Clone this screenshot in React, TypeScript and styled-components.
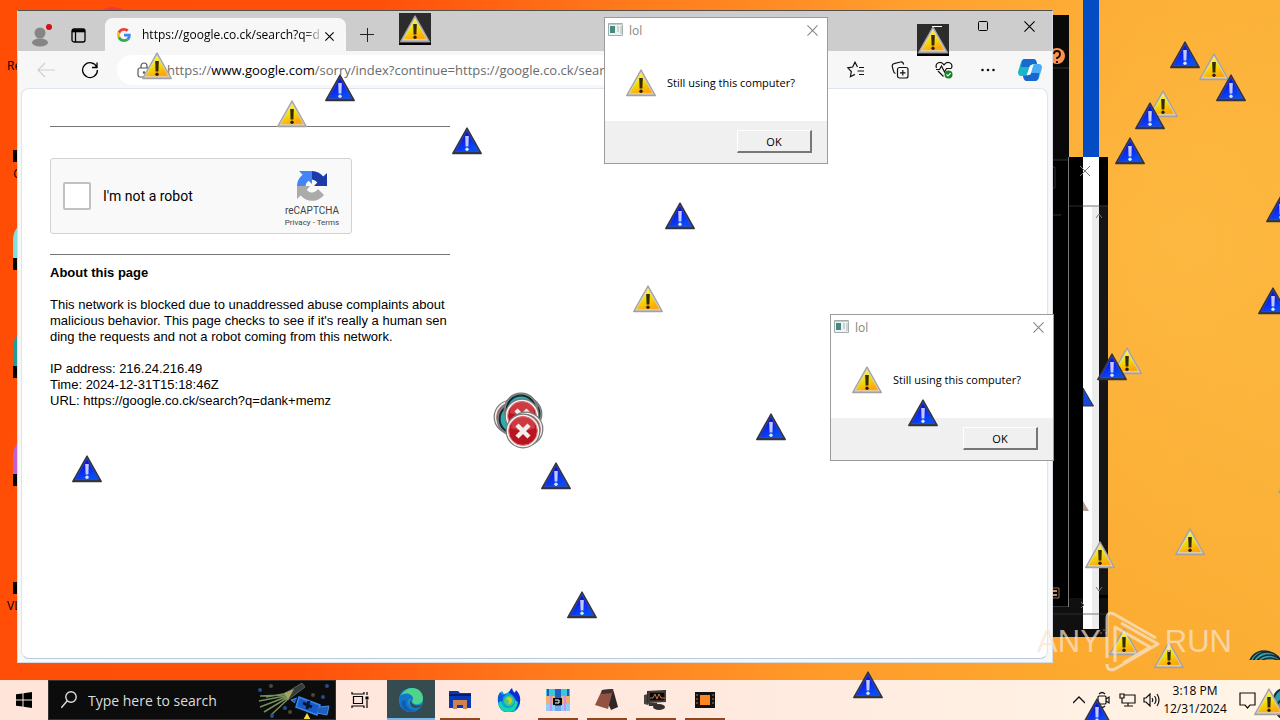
import React from "react";
import styled, { createGlobalStyle } from "styled-components";

const GlobalStyle = createGlobalStyle`
  * { box-sizing: border-box; }
  body { margin: 0; font-family: "Open Sans", "Noto Sans", sans-serif; color: #000; }
  button, input { font: inherit; color: inherit; }
  button { border: 0; padding: 0; background: none; }
`;

const Screen = styled.div`
  display: flex;
  flex-direction: column;
  height: 100vh;
  position: relative;
  overflow: hidden;
`;

const Desktop = styled.main`
  flex: 1;
  position: relative;
  overflow: hidden;
  background:
    radial-gradient(circle at 92% 35%, rgba(255, 205, 90, 0.4), transparent 36%),
    linear-gradient(97deg, #ff4d06 0%, #ff500a 28%, #ff7a1c 46%, #ff9a2a 66%, #fca92f 84%, #fbae34 100%);
`;

const Shortcut = styled.div<{ $y: number }>`
  position: absolute;
  left: 2px;
  top: ${(p) => p.$y}px;
  width: 48px;
  padding-left: 5px;
  font-size: 12px;
  line-height: 16px;
`;

const ShortcutIcon = styled.span<{ $y: number; $color: string }>`
  position: absolute;
  left: 13px;
  top: ${(p) => p.$y}px;
  width: 40px;
  height: 50px;
  border-radius: 20px 20px 0 0;
  background: ${(p) => p.$color};
  &::after {
    content: "";
    position: absolute;
    left: 0;
    bottom: 0;
    width: 12px;
    height: 12px;
    background: #000;
  }
`;

const RedDisc = styled.span`
  position: absolute;
  left: 93px;
  top: 7px;
  width: 40px;
  height: 40px;
  border-radius: 50%;
  background: #f03a3a;
`;

const BlueStrip = styled.div`
  position: absolute;
  left: 1083px;
  top: 0;
  width: 16px;
  height: 157px;
  background: #034cc4;
`;

const BackWindow = styled.div<{ $x: number; $y: number; $w: number; $h: number }>`
  position: absolute;
  left: ${(p) => p.$x}px;
  top: ${(p) => p.$y}px;
  width: ${(p) => p.$w}px;
  height: ${(p) => p.$h}px;
  background: #000;
  overflow: hidden;
  svg { display: block; }
`;

const Browser = styled.section`
  position: absolute;
  left: 17px;
  right: 227px;
  top: 10px;
  bottom: 17px;
  display: flex;
  flex-direction: column;
  background: #f7f7f7;
  border: 1px solid #d7dce2;
  border-top-color: #55504c;
`;

const TabBar = styled.div`
  display: flex;
  align-items: flex-end;
  height: 40px;
  padding-left: 3px;
  background: #cdcdcd;
`;

const TabBarButton = styled.button`
  display: grid;
  place-items: center;
  width: 38px;
  height: 32px;
`;

const Tab = styled.div`
  display: flex;
  align-items: center;
  width: 241px;
  height: 33px;
  margin-left: 8px;
  margin-right: 2px;
  padding: 0 12px;
  background: #f7f7f7;
  border-radius: 8px 8px 0 0;
`;

const TabTitle = styled.span`
  flex: 1;
  margin-left: 11px;
  white-space: nowrap;
  font-size: 12px;
  line-height: 16px;
  mask-image: linear-gradient(90deg, #000 88%, transparent);
`;

const WindowButtons = styled.div`
  display: flex;
  align-self: flex-start;
  margin-left: auto;
`;

const WindowButton = styled.button`
  display: grid;
  place-items: center;
  width: 46px;
  height: 30px;
`;

const Toolbar = styled.div`
  display: flex;
  align-items: center;
  height: 37px;
  padding: 0 2px 0 6px;
`;

const ToolButton = styled.button<{ $narrow?: boolean }>`
  display: grid;
  place-items: center;
  width: ${(p) => (p.$narrow ? 40 : 44)}px;
  height: 32px;
`;

const AddressBar = styled.label`
  display: flex;
  flex: 1;
  min-width: 0;
  align-items: center;
  gap: 16px;
  height: 30px;
  margin-left: 5px;
  margin-right: 8px;
  padding-left: 20px;
  border-radius: 15px;
  background: #fff;
  overflow: hidden;
  white-space: nowrap;
  font-size: 13px;
  color: #6b6b6b;
  b { font-weight: 400; color: #000; }
`;

const Page = styled.article`
  flex: 1;
  margin: 0 4px 3px 3px;
  padding: 37px 28px 0;
  background: #fff;
  border: 1px solid #dfe5ee;
  border-bottom-color: #b9cbdd;
  border-radius: 8px;
  font-family: "Liberation Sans", Arial, sans-serif;
  font-size: 13px;
  line-height: 16px;
`;

const Column = styled.div`
  max-width: 400px;
`;

const Rule = styled.hr`
  height: 1px;
  margin: 0;
  border: 0;
  background: #777;
`;

const Captcha = styled.div`
  display: flex;
  align-items: center;
  width: 302px;
  height: 76px;
  margin: 31px 0 20px;
  padding: 0 9px 0 12px;
  background: #f9f9f9;
  border: 1px solid #d3d3d3;
  border-radius: 3px;
`;

const CaptchaLabel = styled.label`
  display: flex;
  flex: 1;
  align-items: center;
  gap: 12px;
  font-family: Roboto, sans-serif;
  font-size: 14px;
`;

const CaptchaCheck = styled.input`
  appearance: none;
  width: 28px;
  height: 28px;
  margin: 0;
  background: #fff;
  border: 2px solid #c1c1c1;
  border-radius: 2px;
`;

const CaptchaBrand = styled.div`
  display: flex;
  flex-direction: column;
  align-items: center;
  width: 60px;
  padding-top: 5px;
  font-family: Roboto, sans-serif;
  font-size: 10px;
  line-height: 14px;
  color: #444;
  svg { margin-bottom: 2px; }
`;

const CaptchaLinks = styled.div`
  font-size: 8px;
  line-height: 10px;
  a { color: inherit; text-decoration: none; }
`;

const Paragraph = styled.p`
  margin: 0 0 16px;
  white-space: nowrap;
`;

const Heading = styled.h1`
  margin: 10px 0 16px;
  font-size: 13px;
  line-height: 16px;
`;

const DialogBox = styled.section<{ $x: number; $y: number }>`
  position: absolute;
  left: ${(p) => p.$x}px;
  top: ${(p) => p.$y}px;
  width: 224px;
  height: 147px;
  display: flex;
  flex-direction: column;
  background: #fff;
  border: 1px solid #9b9b9b;
`;

const DialogTitle = styled.header`
  display: flex;
  align-items: center;
  gap: 5px;
  height: 24px;
  padding-left: 3px;
  font-size: 12px;
  color: #858585;
  button { display: grid; place-items: center; width: 30px; height: 24px; margin-left: auto; }
`;

const DialogBody = styled.div`
  display: flex;
  flex: 1;
  align-items: center;
  gap: 10px;
  padding: 2px 0 0 20px;
  font-size: 11px;
`;

const DialogFooter = styled.footer`
  display: flex;
  justify-content: flex-end;
  height: 42px;
  padding: 9px 15px 0 0;
  background: #f0f0f0;
`;

const OkButton = styled.button`
  width: 75px;
  height: 23px;
  background: #f0f0f0;
  border: 1px solid #fff;
  border-right: 2px solid #777;
  border-bottom: 2px solid #777;
  font-size: 11px;
`;

const Floating = styled.span<{ $x: number; $y: number; $dark?: boolean }>`
  position: absolute;
  left: ${(p) => p.$x - 16}px;
  top: ${(p) => p.$y - 3}px;
  width: 32px;
  height: 32px;
  background: ${(p) => (p.$dark ? "#2c2c2c" : "transparent")};
  border-bottom: ${(p) => (p.$dark ? "2px solid #000" : "0")};
  pointer-events: none;
  svg { display: block; }
`;

const MinimizeGhost = styled.span`
  position: absolute;
  left: 932px;
  top: 26px;
  width: 10px;
  height: 1px;
  background: #fff;
`;

const ErrorPile = styled.div`
  position: absolute;
  left: 490px;
  top: 388px;
  svg { display: block; }
`;

const CornerPile = styled.div`
  position: absolute;
  left: 1248px;
  top: 648px;
  height: 12px;
  overflow: hidden;
`;

const Watermark = styled.div`
  position: absolute;
  right: 48px;
  top: 609px;
  display: flex;
  align-items: center;
  gap: 2px;
  height: 66px;
  font-family: "Liberation Sans", sans-serif;
  font-size: 31px;
  color: rgba(250, 228, 208, 0.72);
`;

const Taskbar = styled.nav`
  position: relative;
  display: flex;
  height: 40px;
  background: linear-gradient(90deg, #ffe4da, #ffe9df 55%, #fff5e6);
`;

const TaskButton = styled.button<{ $active?: boolean; $open?: boolean }>`
  position: relative;
  display: grid;
  place-items: center;
  width: 48px;
  height: 40px;
  margin-right: 1px;
  background: ${(p) => (p.$active ? "#364b50" : "transparent")};
  &::after {
    content: "";
    position: absolute;
    left: ${(p) => (p.$active ? 0 : 4)}px;
    right: ${(p) => (p.$active ? 0 : 4)}px;
    bottom: 0;
    height: 2px;
    background: ${(p) => (p.$active ? "#76b9ed" : p.$open ? "#8f481c" : "transparent")};
  }
`;

const StartButton = styled.button`
  display: grid;
  place-items: center;
  width: 48px;
`;

const Search = styled.label`
  display: flex;
  align-items: center;
  width: 288px;
  padding-left: 12px;
  background: #0c0c0c;
  border: 1px solid #333;
  color: #dcdcdc;
  input {
    width: 168px;
    margin-left: 11px;
    padding: 0;
    border: 0;
    outline: 0;
    background: none;
    font-size: 14px;
  }
  input::placeholder { color: #dcdcdc; opacity: 1; }
`;

const TaskView = styled(StartButton)`
  margin-right: 3px;
`;

const Tray = styled.div`
  display: flex;
  align-items: center;
  margin-left: auto;
  padding-right: 21px;
`;

const TrayButton = styled.button`
  display: grid;
  place-items: center;
  width: 24px;
  height: 40px;
`;

const Clock = styled.time`
  width: 64px;
  margin: 0 8px 0 0;
  font-size: 12px;
  line-height: 18px;
  text-align: center;
  white-space: nowrap;
`;

function Triangle({ kind = "warn" }: { kind?: "warn" | "blue" }) {
  const warn = kind === "warn";
  return (
    <svg width="32" height="32" viewBox="0 0 32 32">
      <defs>
        <linearGradient id="fillWarn" x1="0" y1="0" x2="0.4" y2="1">
          <stop offset="0" stopColor="#ffff4a" />
          <stop offset="0.6" stopColor="#f2dc06" />
          <stop offset="1" stopColor="#ffa80c" />
        </linearGradient>
        <linearGradient id="fillBlue" x1="0" y1="0" x2="0.5" y2="1">
          <stop offset="0" stopColor="#0a0aa8" />
          <stop offset="0.5" stopColor="#0d1ff0" />
          <stop offset="1" stopColor="#064df5" />
        </linearGradient>
      </defs>
      <path d="M16 3 1.7 28.500h28.600Z" fill={warn ? "#c8c2ba" : "#343846"} stroke={warn ? "#a3a1a4" : "#31343f"} strokeWidth="1.4" strokeLinejoin="round" />
      <path d="M16 5.500 4.200 26.500h23.600Z" fill={warn ? "url(#fillWarn)" : "url(#fillBlue)"} stroke={warn ? "#e4dcc4" : "#3a4fd0"} strokeWidth="0.6" />
      <path d="M14.200 11h3.600l-.4 10.500h-2.800Z" fill={warn ? "#33290a" : "#c3caf6"} />
      <circle cx="16" cy="24.3" r="1.7" fill={warn ? "#2a2104" : "#dfe3ff"} />
    </svg>
  );
}

function Cross({ size = 10, color = "#000" }: { size?: number; color?: string }) {
  return (
    <svg width={size} height={size} viewBox="0 0 10 10" fill="none" stroke={color} strokeWidth={11 / size}>
      <path d="m.4.4 9.2 9.2M9.6.4.4 9.6" />
    </svg>
  );
}

function Dialog({ x, y }: { x: number; y: number }) {
  return (
    <DialogBox $x={x} $y={y} role="dialog" aria-label="lol">
      <DialogTitle>
        <svg width="16" height="14" viewBox="0 0 16 14">
          <path d="M.5.5h14v12H.5Z" fill="#edf2f2" stroke="#a3aeab" />
          <path d="M2 3h5v7H2Z" fill="#438a82" />
          <path d="M9 3h2v6H9ZM12 3h2v8h-2Z" fill="#ccd4d6" />
          <path d="M1 1.500h14" stroke="#c4ccca" />
        </svg>
        <span>lol</span>
        <button aria-label="Close"><Cross size={11} color="#888" /></button>
      </DialogTitle>
      <DialogBody>
        <Triangle />
        <span>Still using this computer?</span>
      </DialogBody>
      <DialogFooter><OkButton>OK</OkButton></DialogFooter>
    </DialogBox>
  );
}

function ErrorDisc({ x, y, teal = false }: { x: number; y: number; teal?: boolean }) {
  return (
    <g transform={`translate(${x} ${y})`}>
      <circle r="16.8" fill={teal ? "#8a9494" : "#f5f2f1"} stroke="#777" strokeWidth="1.2" />
      <circle r="14.4" fill={teal ? "#32a9aa" : "#b91520"} stroke={teal ? "#112d31" : "#d88384"} strokeWidth={teal ? 2 : 1} />
      {!teal && <path d="M-12 -3a12 12 0 0 1 24 0q-11 5-24 0Z" fill="#df5a5e" opacity=".55" />}
      {!teal && <path d="m-6-6 12 12M6-6-6 6" stroke="#f1eeee" strokeWidth="4.4" />}
    </g>
  );
}

type Mark = [number, number, "warn" | "blue", boolean?];

const backTriangles: Mark[] = [
  [1185, 42, "blue"], [1214, 54, "warn"], [1231, 75, "blue"], [1163, 91, "warn"], [1150, 103, "blue"],
  [1130, 138, "blue"], [1281, 196, "blue"], [1273, 288, "blue"], [1127, 348, "warn"], [1112, 354, "blue"],
  [1293, 467, "warn"], [1190, 529, "warn"], [1100, 542, "warn"], [1124, 629, "warn"], [1169, 642, "warn"],
];

const pageTriangles: Mark[] = [
  [157, 53, "warn"], [340, 75, "blue"], [292, 101, "warn"], [415, 16, "warn", true], [933, 27, "warn", true],
  [467, 128, "blue"], [680, 203, "blue"], [648, 286, "warn"], [771, 414, "blue"], [556, 463, "blue"],
  [87, 456, "blue"], [582, 592, "blue"], [923, 400, "blue"],
];

export default function App() {
  return (
    <Screen>
      <GlobalStyle />
      <Desktop>
        <RedDisc />
        <ShortcutIcon $y={112} $color="transparent" />
        <ShortcutIcon $y={220} $color="#83e1dc" />
        <ShortcutIcon $y={328} $color="#239c9e" />
        <ShortcutIcon $y={436} $color="#c360cf" />
        <ShortcutIcon $y={544} $color="transparent" />
        <Shortcut $y={58}>Re</Shortcut>
        <Shortcut $y={166}>&nbsp;&nbsp;C</Shortcut>
        <Shortcut $y={598}>VL</Shortcut>
        <BlueStrip />

        <BackWindow $x={1040} $y={157} $w={68} $h={480}>
          <svg width="68" height="480" fill="none">
            <path d="M0 441h68v39H0Z" fill="#101010" />
            <path d="M59 48h9v390h-9Z" fill="#151515" />
            <path d="M43 0h16v472H43Z" fill="#fff" />
            <path d="M52 49h7v423h-7Z" fill="#ececec" />
            <path d="M28 49h40M0 457h68" stroke="#2c2c2c" />
            <path d="M43 49h16M43 457h16" stroke="#ddd" />
            <path d="m40 9 10 10m0-10L40 19" stroke="#777" />
            <path d="m56 61 3-4 3 4m-6 369 3 4 3-4M41 445l3 3-3 3" stroke="#777" />
            <path d="m43 231 10.500 18H43Z" fill="#1549d5" stroke="#30343f" />
            <path d="M0 50h43v391H0Z" fill="#000" />
            <path d="m43 344 6 10h-6Z" fill="#b69e96" />
            <path d="M60 476h2m1-3h2m0 3h2" stroke="#777" />
          </svg>
        </BackWindow>
        <BackWindow $x={1040} $y={15} $w={29} $h={592}>
          <svg width="29" height="592" fill="none">
            <path d="M13 0h16v145H13Z" fill="#090909" />
            <circle cx="17" cy="41" r="8" fill="#ff934c" />
            <path d="M14 39q0-3 3-3t3 3-3 4v1m0 2v2" stroke="#160a03" strokeWidth="1.8" />
            <path d="M0 53h29M0 145h29M0 200h21M0 591.500h29" stroke="#333" />
            <path d="M10 152h5v21h-5" stroke="#333" />
            <path d="M28.500 142v450" stroke="#777" />
            <path d="M10 573h9v10h-9" stroke="#777" />
            <path d="M10 576h7m-7 4h7" stroke="#dd8c4c" strokeWidth="2" />
          </svg>
        </BackWindow>

        <Browser>
          <TabBar>
            <TabBarButton aria-label="Profile">
              <svg width="24" height="26" viewBox="0 0 24 26">
                <circle cx="12" cy="11" r="5.5" fill="#858585" />
                <ellipse cx="12" cy="20.5" rx="8" ry="4" fill="#858585" />
                <circle cx="21" cy="5" r="3" fill="#d90c1c" />
              </svg>
            </TabBarButton>
            <TabBarButton aria-label="Tab actions">
              <svg width="15" height="15" viewBox="0 0 15 15" fill="none" stroke="#000" strokeWidth="1.3">
                <rect x="1" y="1" width="13" height="13" rx="2" />
                <path d="M1 2.800h13" strokeWidth="3" />
                <path d="M4.500 4v10" />
              </svg>
            </TabBarButton>
            <Tab>
              <svg width="14" height="14" viewBox="0 0 48 48">
                <path fill="#ea4335" d="M24 9.500c3.540 0 6.710 1.220 9.210 3.600l6.850-6.850C35.900 2.380 30.470 0 24 0 14.620 0 6.510 5.380 2.560 13.220l7.980 6.190C12.430 13.720 17.740 9.500 24 9.500z" />
                <path fill="#4285f4" d="M46.980 24.550c0-1.570-.15-3.090-.38-4.550H24v9.020h12.940c-.58 2.960-2.260 5.480-4.780 7.180l7.730 6c4.510-4.180 7.090-10.360 7.090-17.650z" />
                <path fill="#fbbc05" d="M10.530 28.590c-.48-1.450-.76-2.990-.76-4.590s.27-3.140.76-4.590l-7.980-6.190C.92 16.460 0 20.120 0 24c0 3.880.92 7.540 2.560 10.780l7.970-6.190z" />
                <path fill="#34a853" d="M24 48c6.480 0 11.930-2.130 15.890-5.810l-7.730-6c-2.150 1.450-4.920 2.300-8.160 2.300-6.260 0-11.570-4.220-13.470-9.910l-7.980 6.190C6.510 42.620 14.620 48 24 48z" />
              </svg>
              <TabTitle>https://google.co.ck/search?q=d</TabTitle>
              <button aria-label="Close tab"><Cross size={9} /></button>
            </Tab>
            <TabBarButton aria-label="New tab">
              <svg width="14" height="14" stroke="#222"><path d="M7.500 0v14M0 6.500h14" /></svg>
            </TabBarButton>
            <WindowButtons>
              <WindowButton aria-label="Minimize"><svg width="10" height="10" stroke="#000"><path d="M0 5.500h10" /></svg></WindowButton>
              <WindowButton aria-label="Maximize"><svg width="11" height="11" fill="none" stroke="#000"><rect x=".5" y=".5" width="9" height="9" rx="1" /></svg></WindowButton>
              <WindowButton aria-label="Close"><Cross size={11} /></WindowButton>
            </WindowButtons>
          </TabBar>

          <Toolbar>
            <ToolButton aria-label="Back">
              <svg width="18" height="16" fill="none" stroke="#d0d0d0" strokeWidth="1.2"><path d="M18 8H1m7-7L1 8l7 7" /></svg>
            </ToolButton>
            <ToolButton aria-label="Reload">
              <svg width="18" height="18" fill="none" stroke="#000" strokeWidth="1.3"><path d="M15.800 6.200A7.400 7.400 0 1 0 16.400 9M16 1.500v5h-5" /></svg>
            </ToolButton>
            <AddressBar>
              <svg width="14" height="16" viewBox="0 0 14 16" fill="none" stroke="#555" strokeWidth="1.2"><rect x="1" y="6" width="12" height="9" rx="2" /><path d="M4 6V4a3 3 0 0 1 6 0v2" /><circle cx="7" cy="10.5" r=".6" /></svg>
              <span>https://<b>www.google.com</b>/sorry/index?continue=https://google.co.ck/sear</span>
            </AddressBar>
            <ToolButton aria-label="Favorites">
              <svg width="18" height="18" viewBox="0 0 18 18" fill="none" stroke="#111" strokeWidth="1.2"><path d="M10.500 6 8 1.200 5.700 6 .8 6.800l3.500 3.700-.9 5.200 4.500-2.300M12 6.500h5M10.500 10H17m-5 3.500h5" /></svg>
            </ToolButton>
            <ToolButton aria-label="Collections">
              <svg width="18" height="18" viewBox="0 0 18 18" fill="none" stroke="#111" strokeWidth="1.2"><rect x="6.5" y="6.5" width="10.5" height="10.5" rx="2" /><path d="M11.800 9v5.500M9 11.800h5.500M4.500 12.500A3 3 0 0 1 2.500 10L1.200 5.500Q1 3 3 2.600L9.500 1q2.500-.4 3.200 2.500" /></svg>
            </ToolButton>
            <ToolButton aria-label="Browser essentials">
              <svg width="18" height="18" viewBox="0 0 18 18" fill="none" stroke="#111" strokeWidth="1.2"><path d="M1.500 7C-.5 1.500 6-.5 9 3.800 12-.5 18.500 1.500 16.500 7M3 10l5.500 5.500M1 8.500h3.500l2-3.500 3 6 2-3.500h5" /><circle cx="13.5" cy="13.5" r="4" fill="#168423" stroke="none" /><path d="m11.500 13.500 1.500 1.400 2.600-2.700" stroke="#fff" /></svg>
            </ToolButton>
            <ToolButton aria-label="Settings and more">
              <svg width="14" height="4" fill="#111"><circle cx="1.5" cy="2" r="1.3" /><circle cx="7" cy="2" r="1.3" /><circle cx="12.5" cy="2" r="1.3" /></svg>
            </ToolButton>
            <ToolButton $narrow aria-label="Copilot">
              <svg width="24" height="24" viewBox="0 0 24 24">
                <path d="M6 1h9q3 0 3.500 3l.5 2h-4q-2 0-3 3l-2 6q-1 3-4 3H3q-3 0-3-4L3 4q1-3 3-3Z" fill="#19b6c6" />
                <path d="M6 1h9q3 0 3.500 3l.5 2h-4q-2 0-3 3H3L4 4q.5-2 2-3Z" fill="#166ad0" />
                <path d="M18 6h3q3 0 3 4l-3 10q-1 3-4 3H9q-3 0-3.500-3L5 18q4 0 5-3l3-7q1-2 5-2Z" fill="#49aef6" />
                <path d="M21 15q0 8-4 8H9q-3 0-4-5 4 0 5-3Z" fill="#1866ce" />
                <path d="m12 7.500 3.500-1-3 10-4 1Z" fill="#fff" />
              </svg>
            </ToolButton>
          </Toolbar>

          <Page>
            <Column>
              <Rule />
              <Captcha>
                <CaptchaLabel><CaptchaCheck type="checkbox" />I'm not a robot</CaptchaLabel>
                <CaptchaBrand>
                  <svg width="32" height="32" viewBox="0 0 32 32">
                    <path d="M31 15.900v-13l-3.700 3.700A15 15 0 0 0 16 1v8.500a7 7 0 0 1 5.300 3.100L18 15.900Z" fill="#1c3aa9" />
                    <path d="M16 1H3l3.600 3.700A15 15 0 0 0 1 16h8.500a7 7 0 0 1 3.100-5.300L16 14Z" fill="#4285f4" />
                    <path d="M1 16v13l3.700-3.600A15 15 0 0 0 28 25l-6-6a7 7 0 0 1-11.300 1L14 16Z" fill="#ababab" />
                  </svg>
                  reCAPTCHA
                  <CaptchaLinks><a href="#privacy">Privacy</a> - <a href="#terms">Terms</a></CaptchaLinks>
                </CaptchaBrand>
              </Captcha>
              <Rule />
              <Heading>About this page</Heading>
              <Paragraph>
                This network is blocked due to unaddressed abuse complaints about<br />
                malicious behavior. This page checks to see if it's really a human sen<br />
                ding the requests and not a robot coming from this network.
              </Paragraph>
              <Paragraph>
                IP address: 216.24.216.49<br />
                Time: 2024-12-31T15:18:46Z<br />
                URL: https://google.co.ck/search?q=dank+memz
              </Paragraph>
            </Column>
          </Page>
        </Browser>

        <Dialog x={604} y={17} />
        <Dialog x={830} y={314} />

        <ErrorPile>
          <svg width="60" height="64">
            <ErrorDisc x={21} y={29} />
            <ErrorDisc x={24} y={31} teal />
            <ErrorDisc x={35} y={26} teal />
            <ErrorDisc x={31} y={22} teal />
            <ErrorDisc x={32} y={28} />
            <ErrorDisc x={36} y={41} />
            <ErrorDisc x={33} y={43} />
          </svg>
        </ErrorPile>
        <CornerPile>
          <svg width="36" height="20" fill="#329fb0" stroke="#17282d" strokeWidth="1.6">
            <circle cx="16" cy="18" r="15" /><circle cx="19" cy="19" r="15" /><circle cx="21" cy="22" r="15" /><circle cx="22" cy="25" r="15" />
          </svg>
        </CornerPile>

        {backTriangles.map(([x, y, kind]) => <Floating key={`${x}-${y}`} $x={x} $y={y}><Triangle kind={kind} /></Floating>)}
        {pageTriangles.map(([x, y, kind, dark]) => <Floating key={`${x}-${y}`} $x={x} $y={y} $dark={dark}><Triangle kind={kind} /></Floating>)}
        <MinimizeGhost />

        <Watermark>
          <span>ANY</span>
          <svg width="60" height="64" viewBox="0 0 60 64" fill="none" stroke="currentColor" strokeWidth="3" strokeLinejoin="round">
            <path d="M4 48V9q0-8 7-5l42 24M12 52V17l35 20-27 16M4 54q0 8 8 5l43-25-37-21" />
          </svg>
          <span>RUN</span>
        </Watermark>
      </Desktop>

      <Taskbar>
        <StartButton aria-label="Start">
          <svg width="16" height="16"><path d="M0 2.300 6.500 1.400v6.100H0ZM7.500 1.200 16 0v7.500H7.500ZM0 8.500h6.500v6.100L0 13.700ZM7.500 8.500H16V16l-8.500-1.200Z" /></svg>
        </StartButton>
        <Search>
          <svg width="16" height="18" fill="none" stroke="#ddd" strokeWidth="1.4"><circle cx="10" cy="6" r="5.2" /><path d="m6.300 9.800-6 7" /></svg>
          <input aria-label="Search" placeholder="Type here to search" />
          <svg width="76" height="38" viewBox="0 0 76 38" fill="none">
            <path d="m28 13 18-11 3 4-17 13Z" fill="#343d39" stroke="#555f55" />
            <path d="M30 14 4 15m25 0L3 20m27-4L4 26m27-9L8 31m24-13L15 34M33 12 10 16" stroke="#76905a" strokeWidth="1.5" />
            <path d="m28 12 10-4-6 11Z" fill="#a3a464" />
            <path d="m43 16 21 8-3 10-21-8Z" fill="#175bc4" stroke="#3488f0" strokeWidth="1.5" />
            <path d="m41 17-6 2 4 3m24 4 10-1-2 9-10-2" fill="#205fbe" stroke="#438ae5" />
            <path d="m47 22 9 4m-3-6-2 8" stroke="#061330" strokeWidth="3" />
            <g fill="#254f8c"><circle cx="4" cy="9" r="2" /><circle cx="71" cy="5" r="2" /><circle cx="29" cy="27" r="2" /><circle cx="16" cy="35" r="2" /><circle cx="67" cy="16" r="2" /></g>
            <g fill="#4c4a32"><circle cx="15" cy="5" r="2" /><circle cx="34" cy="31" r="2" /><circle cx="57" cy="14" r="2" /></g>
            <path d="m51 32-5 9h10Z" fill="#f1dc45" />
          </svg>
        </Search>
        <TaskView aria-label="Task View">
          <svg width="18" height="16" fill="none" stroke="#000" strokeWidth="1.2"><path d="M2.500 4.500h9v7h-9ZM1 0v2h12V0M1 16v-2h12v2M16 0v3m0 5v8" /><path d="M14.500 4.500h3v3h-3Z" fill="#000" stroke="none" /></svg>
        </TaskView>
        <TaskButton $active aria-label="Edge">
          <svg width="24" height="24" viewBox="0 0 24 24">
            <circle cx="12" cy="12" r="12" fill="#1594d2" />
            <path d="M2 8Q6 0 13 0c8 0 11 6 11 10 0 5-4 7-8 6q-4-1-2-4Q14 5 2 8Z" fill="#4fd48b" />
            <path d="M1 8c6-5 13-2 13 3-4-2-7 2-4 6 3 5 9 4 12 1-5 9-20 8-22-4Z" fill="#1376ca" />
            <path d="M7 12c-2 7 5 12 11 10-9 5-17-2-15-9Z" fill="#155cb0" />
            <path d="M13 11q-2 3 1 5 4 3 9 0l-2 3q-8 3-10-3 0-4 2-5Z" fill="#364b50" />
          </svg>
        </TaskButton>
        <TaskButton $open aria-label="File Explorer">
          <svg width="22" height="20"><path d="M0 1h9l2 2h11v15H0Z" fill="#0638b8" /><path d="M0 5h22" stroke="#061b6c" strokeWidth="2" /><path d="M4 10h14v9h-4v-4H8v4H4Z" fill="#ce824d" /></svg>
        </TaskButton>
        <TaskButton aria-label="Firefox">
          <svg width="24" height="24" viewBox="0 0 24 24">
            <path d="M2 6 5 3l2 3 3-1 5-4 2 4 2-2q5 5 4 11a11 11 0 0 1-22 0Q0 9 2 6Z" fill="#0aa3e0" />
            <path d="M12 5q1-4 3-5 0 3 3 5l1-3q5 5 4 12-1 5-5 8 3-9-1-13-2-3-5-4Z" fill="#0a2fd0" />
            <path d="M1 9 3 4l2 3 5-1q-5 2-4 6-3 4-5 3Z" fill="#0d55dd" />
            <path d="M1 15q3 9 11 9 8-1 9-10l-3-2q0 8-7 8-6 0-7-7Z" fill="#12d8a8" />
            <circle cx="12" cy="13" r="5" fill="#4fc878" />
            <path d="M9 10q5-2 6 2 0 4-4 4 3-3-2-6Z" fill="#c7d324" />
          </svg>
        </TaskButton>
        <TaskButton $open aria-label="WinRAR">
          <svg width="24" height="22"><path d="M0 0h24v7H0Z" fill="#39c7dd" /><path d="M0 7h24v8H0Z" fill="#eab173" /><path d="M0 15h24v7H0Z" fill="#8ed0f4" /><path d="M2 0v7M22 0v7" stroke="#1c5fb0" strokeWidth="2" /><path d="M5 7v15M19 7v15" stroke="#d88ae8" strokeWidth="2" /><path d="M9 0h6v22H9Z" fill="#235ec5" /><path d="M7 9h9v7H7Z" fill="#080c0c" /><path d="M9 11h4v3H9" fill="none" stroke="#fff" /><path d="M9 17h6v5H9Z" fill="#6fa8f0" /></svg>
        </TaskButton>
        <TaskButton $open aria-label="Notebook">
          <svg width="24" height="22"><path d="m7 1 11-1 5 18-7 3Z" fill="#302625" /><path d="M7 1h11l-5 19L0 16Z" fill="#945143" /><path d="m7 1 11-1-1 4L6 5Z" fill="#40302e" /></svg>
        </TaskButton>
        <TaskButton $open aria-label="Monitor">
          <svg width="24" height="22"><path d="m0 6 4-1v11l-4-1Z" fill="#4a4542" /><path d="m3 2 19-1v12l-19 1Z" fill="#302d2b" /><path d="M5 3h16v9H5Z" fill="#090909" stroke="#555" /><path d="M6 9h3l2-4 2 5 2-5 2 4h4" fill="none" stroke="#d37040" /><path d="M4 14h9l1 3H5Z" fill="#3a3634" /><ellipse cx="15" cy="18" rx="6" ry="3" fill="#332f2d" /></svg>
        </TaskButton>
        <TaskButton $open aria-label="Video">
          <svg width="20" height="16"><path d="M0 0h20v16H0Z" fill="#111" /><path d="M5 3h10v10H5Z" fill="#ff8522" /><path d="M2 2v12M18 2v12" stroke="#b87a52" strokeDasharray="2 2" /></svg>
        </TaskButton>
        <Tray>
          <TrayButton aria-label="Show hidden icons"><svg width="12" height="8" fill="none" stroke="#111" strokeWidth="1.3"><path d="m0 7 6-6 6 6" /></svg></TrayButton>
          <TrayButton aria-label="Meet now"><svg width="14" height="18" fill="none" stroke="#111" strokeWidth="1.2"><rect x="2" y="5" width="8" height="8" rx="1" /><path d="m10 8 3-2v6l-3-2M3 3q3-3 6 0M3 15q3 3 6 0" /></svg></TrayButton>
          <TrayButton aria-label="Network"><svg width="17" height="14" fill="none" stroke="#111" strokeWidth="1.2"><path d="M5 2h11v8H3V5M1 1h4v4H1ZM9 10v3m-4 0h9" /></svg></TrayButton>
          <TrayButton aria-label="Volume"><svg width="17" height="14" fill="none" stroke="#111" strokeWidth="1.2"><path d="M1 5h2l4-4v12L3 9H1ZM9 5q1.500 2 0 4M11.500 3q3 4 0 8M14 1q4 6 0 12" /></svg></TrayButton>
          <Clock>3:18 PM<br />12/31/2024</Clock>
          <TrayButton aria-label="Notifications"><svg width="17" height="17" fill="none" stroke="#111" strokeWidth="1.2"><path d="M1 1h15v12h-5l-2.500 3L6 13H1Z" /></svg></TrayButton>
        </Tray>
        <Floating $x={1097} $y={19}><Triangle kind="blue" /></Floating>
        <Floating $x={868} $y={-8}><Triangle kind="blue" /></Floating>
        <Floating $x={1288} $y={10}><svg width="32" height="32" fill="#2c99ac" stroke="#142e35" strokeWidth="2"><circle cx="12" cy="12" r="10" /><circle cx="14" cy="22" r="10" /></svg></Floating>
        <Floating $x={1269} $y={9}><Triangle /></Floating>
      </Taskbar>
    </Screen>
  );
}
